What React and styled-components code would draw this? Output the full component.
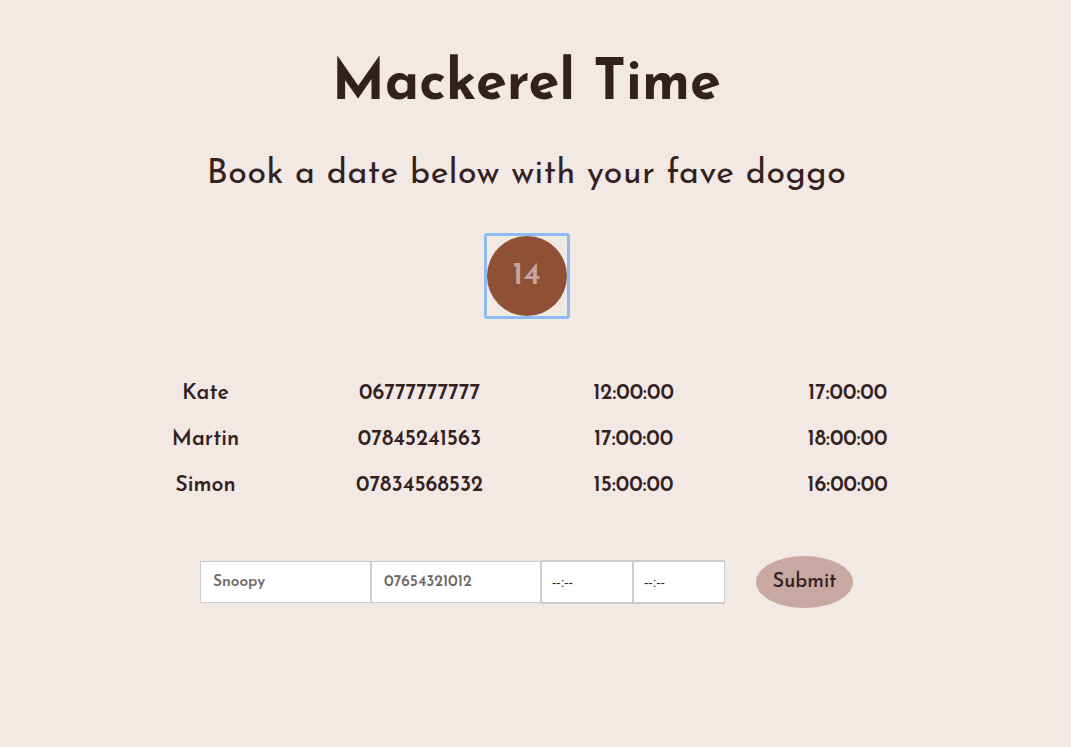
import React from "react";
import styled, { createGlobalStyle } from "styled-components";

const Global = createGlobalStyle`
  html, body { margin: 0; padding: 0; background: #f2e8e4; }
  body { font-family: "Josefin Sans", Lato, "Noto Sans", sans-serif; color: #33211f; }
`;

const Page = styled.main`
  display: flex;
  flex-direction: column;
  align-items: center;
  padding-top: 50px;
  padding-right: 18px;
  min-height: 747px;
  box-sizing: border-box;
`;

const Title = styled.h1`
  margin: 0;
  font-size: 55.8px;
  font-weight: 700;
  line-height: 70px;
`;

const Subtitle = styled.h2`
  margin: 33px 0 0;
  font-size: 34px;
  font-weight: 400;
  line-height: 44px;
  letter-spacing: 0.5px;
`;

const DayFrame = styled.div`
  margin-top: 36px;
  width: 80px;
  height: 80px;
  border: 3px solid #8cbcf3;
  border-radius: 3px;
  display: flex;
  align-items: center;
  justify-content: center;
`;

const Day = styled.button`
  width: 80px;
  height: 80px;
  border-radius: 50%;
  border: none;
  background: #8f5136;
  color: #c7a59e;
  font-family: inherit;
  font-size: 32px;
  font-weight: 600;
  padding: 0;
  cursor: pointer;
`;

const Table = styled.div`
  margin-top: 52px;
  width: 856px;
  display: grid;
  grid-template-columns: repeat(4, 1fr);
`;

const Cell = styled.div`
  text-align: center;
  font-size: 21.5px;
  font-weight: 600;
  line-height: 46px;
`;

const Form = styled.form`
  margin-top: 47px;
  display: flex;
  align-items: center;
`;

const Field = styled.input`
  box-sizing: border-box;
  width: ${(p) => p.$w}px;
  height: 42px;
  border: 1px solid #cfcbca;
  background: #fff;
  padding: 0 12px;
  font-family: inherit;
  font-size: 15.5px;
  font-weight: 600;
  color: #33211f;
  outline: none;
  &::placeholder { color: #6f6663; }
`;

const TimeField = styled(Field)`
  height: 44px;
  border-width: 2px 1px;
  padding: 0 10px;
  font-size: 13px;
  font-weight: 400;
  font-family: "Liberation Sans", sans-serif;
  &::placeholder { color: #1a1a1a; }
`;

const Submit = styled.button`
  margin-left: 31px;
  width: 97px;
  height: 52px;
  border-radius: 50%;
  border: none;
  background: #c9a8a2;
  color: #33211f;
  font-family: inherit;
  font-size: 20px;
  font-weight: 500;
  padding: 0;
  cursor: pointer;
`;

const rows = [
  ["Kate", "06777777777", "12:00:00", "17:00:00"],
  ["Martin", "07845241563", "17:00:00", "18:00:00"],
  ["Simon", "07834568532", "15:00:00", "16:00:00"],
];

export default function App() {
  return (
    <>
      <Global />
      <Page>
        <Title>Mackerel Time</Title>
        <Subtitle>Book a date below with your fave doggo</Subtitle>
        <DayFrame>
          <Day type="button">14</Day>
        </DayFrame>
        <Table>
          {rows.map((r) => r.map((c, i) => <Cell key={r[0] + i}>{c}</Cell>))}
        </Table>
        <Form onSubmit={(e) => e.preventDefault()}>
          <Field $w={171} placeholder="Snoopy" />
          <Field $w={170} placeholder="07654321012" />
          <TimeField $w={92} placeholder="--:--" />
          <TimeField $w={92} placeholder="--:--" />
          <Submit type="submit">Submit</Submit>
        </Form>
      </Page>
    </>
  );
}
